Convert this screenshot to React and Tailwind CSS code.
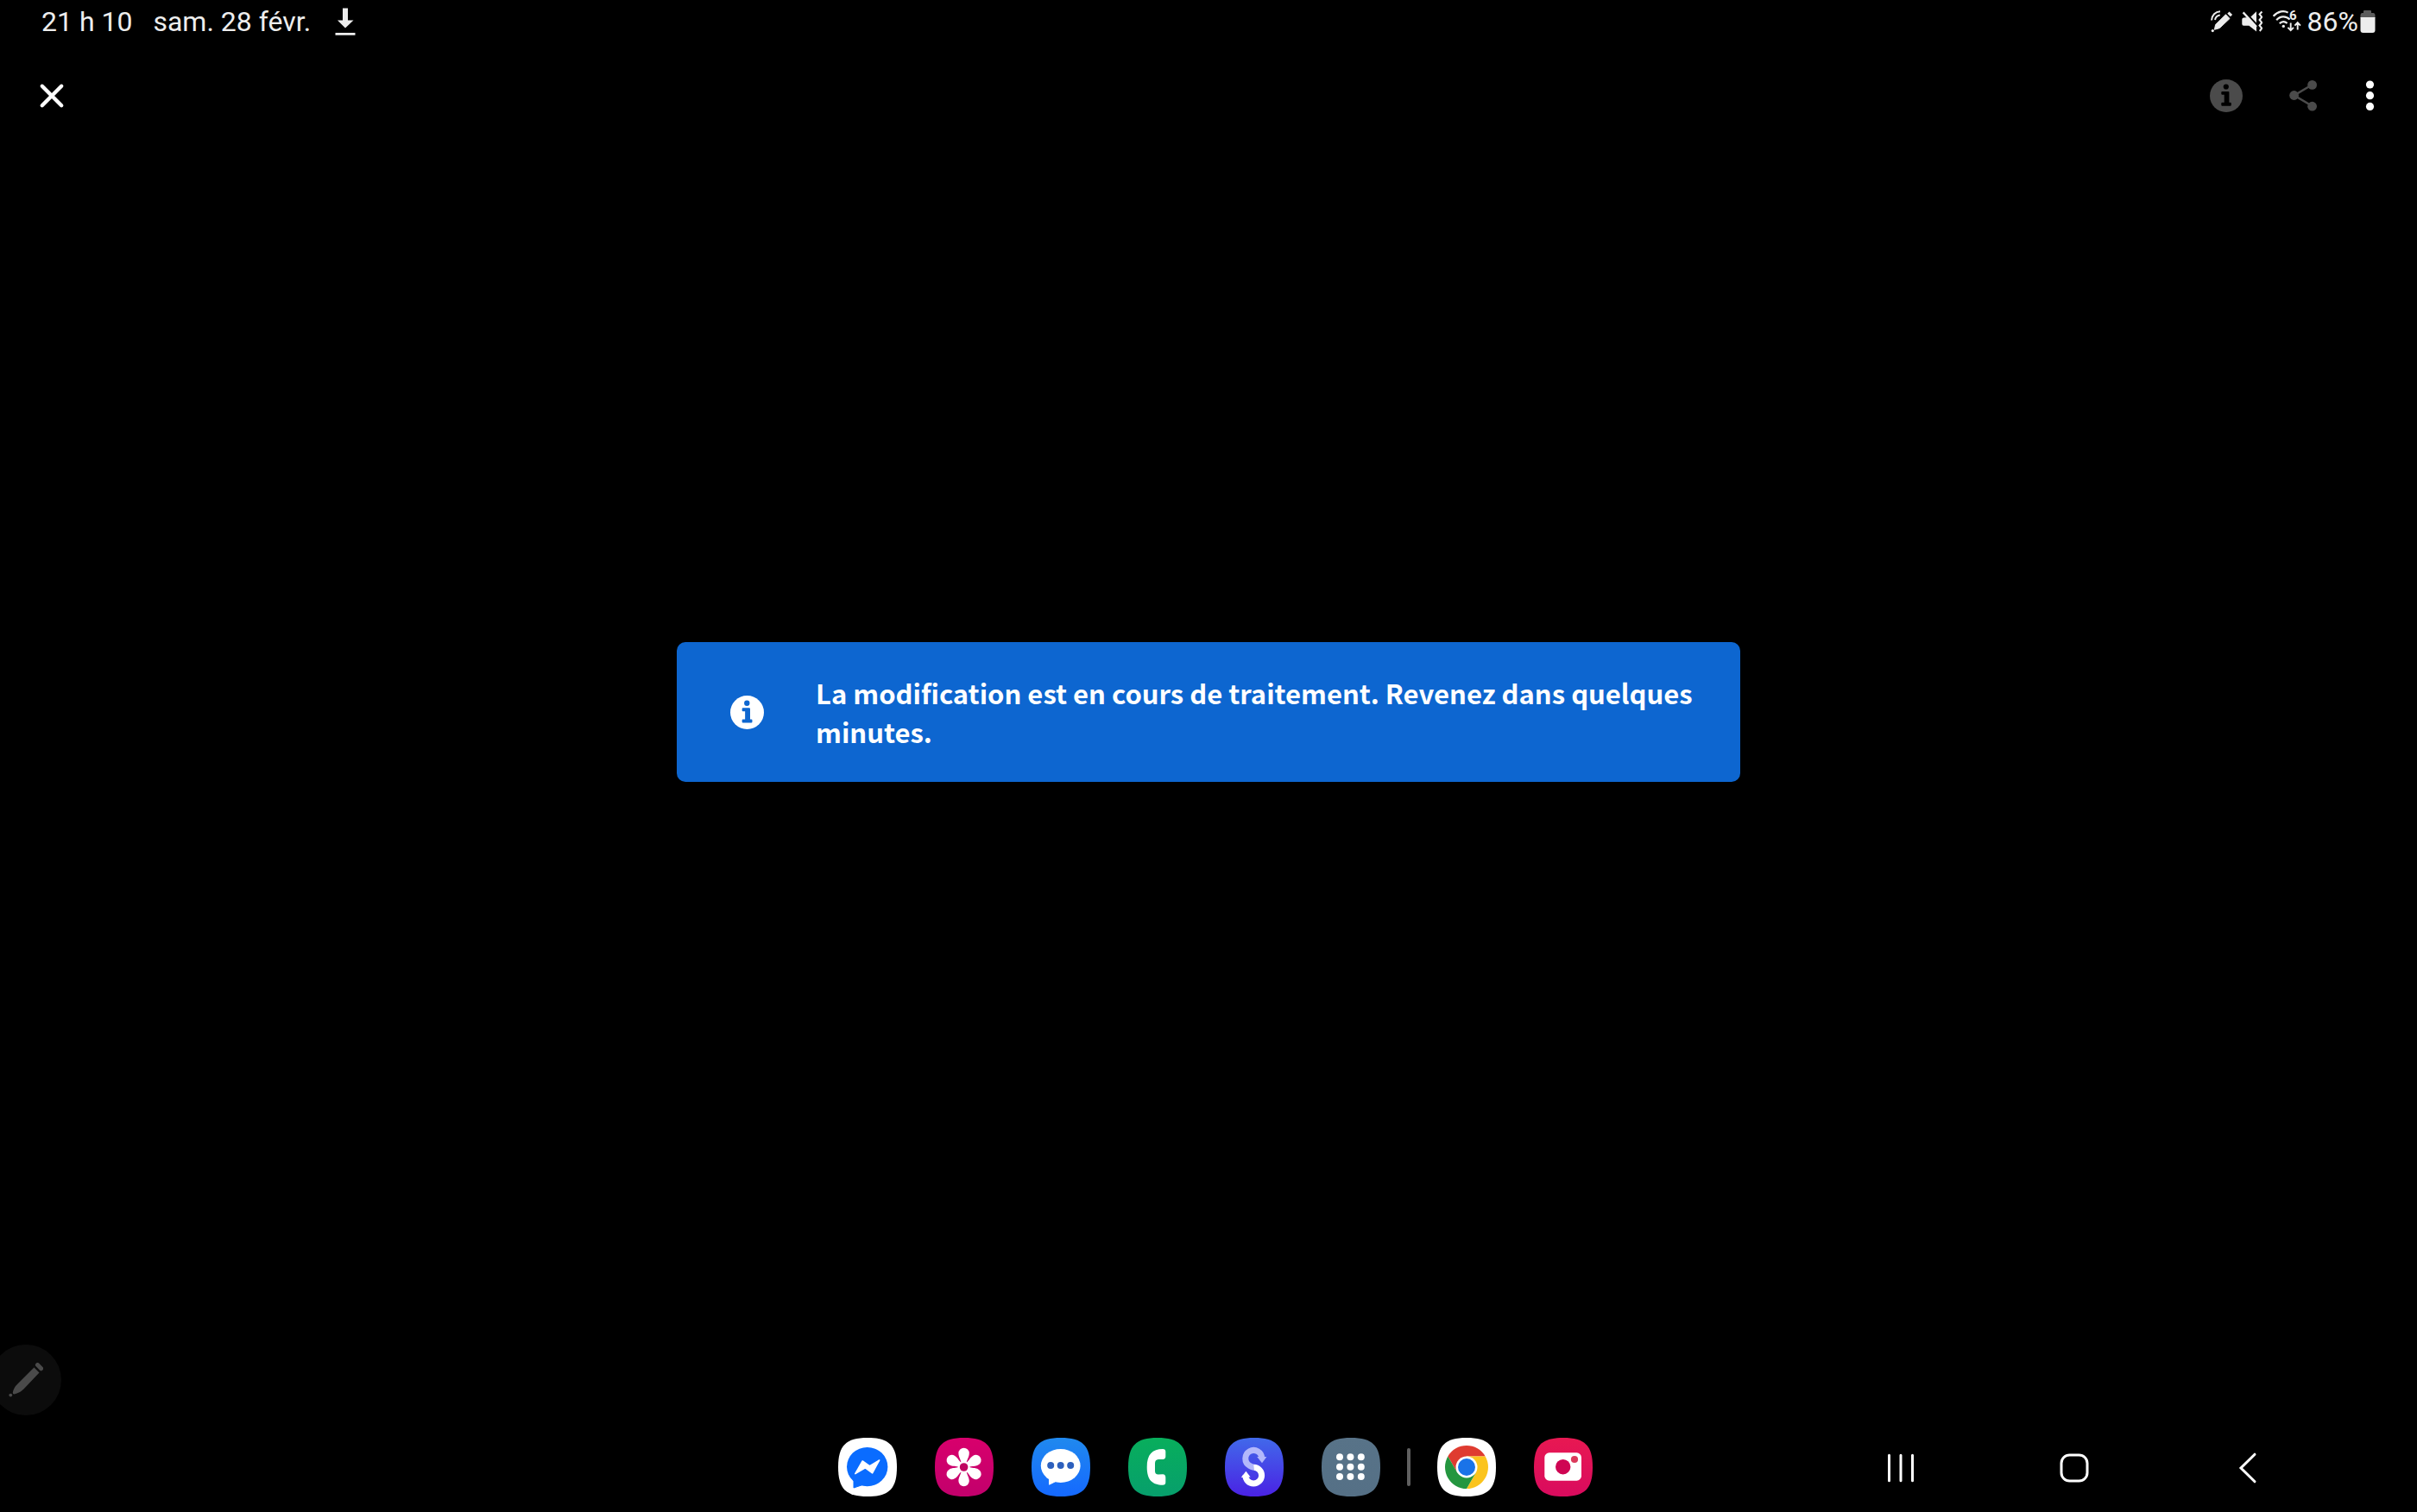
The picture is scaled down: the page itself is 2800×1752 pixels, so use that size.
const TILE = "M34 0C59 0 68 9 68 34S59 68 34 68 0 59 0 34 9 0 34 0Z";

function AppTile({ label, id, from, to, children }) {
  return (
    <button type="button" aria-label={label} className="size-[68px] shrink-0">
      <svg viewBox="0 0 68 68" className="size-full" aria-hidden="true">
        <defs>
          <linearGradient id={id} x1="0" y1="0" x2="0" y2="1">
            <stop offset="0" stopColor={from} />
            <stop offset="1" stopColor={to} />
          </linearGradient>
        </defs>
        <path d={TILE} fill={`url(#${id})`} />
        {children}
      </svg>
    </button>
  );
}

function InfoIcon({ disc, mark, className }) {
  return (
    <svg viewBox="0 0 38 38" className={className} aria-hidden="true">
      <circle cx="19" cy="19" r="19" fill={disc} />
      <circle cx="18.8" cy="8.5" r="3.1" fill={mark} />
      <path
        d="M14.3 14H21.4Q22.4 14 22.4 15V26.8H23.8Q24.8 26.8 24.8 27.8V29.7Q24.8 30.7 23.8 30.7H14.3Q13.3 30.7 13.3 29.7V27.8Q13.3 26.8 14.3 26.8H16.7V17.8H14.3Q13.3 17.8 13.3 16.8V15Q13.3 14 14.3 14Z"
        fill={mark}
      />
    </svg>
  );
}

function StatusBar() {
  return (
    <div className="flex h-[50px] items-center justify-between pr-12 pl-12 text-[32px] leading-[50px] text-[#ededed]">
      <div className="flex items-center">
        <time>21 h 10</time>
        <span className="ml-6">sam. 28 févr.</span>
        <svg viewBox="0 0 24 32" className="ml-7 h-8 w-6" fill="currentColor" role="img" aria-label="Téléchargement">
          <path d="M9 0.5H15V14.5H21.5L12 23.5 3 14.5H9Z" />
          <path d="M0.5 29H23.5V31.8H0.5Z" />
        </svg>
      </div>
      <div className="flex items-center">
        <svg viewBox="0 0 26 26" className="size-[26px]" role="img" aria-label="Stylet connecté">
          <path d="M17.5 4.8L22 9.5 10.3 20.6 4.4 22.3 5.6 16.6Z" fill="currentColor" stroke="currentColor" strokeWidth="1" strokeLinejoin="round" />
          <path d="M20.4 2.6L24 6.2" stroke="currentColor" strokeWidth="3.2" />
          <circle cx="2.3" cy="23.6" r="1.6" fill="currentColor" />
          <path d="M1 11.5C1.4 5.6 5.4 1.6 11 1.3M5 11C5.6 8 7.6 6 10.8 5.6" fill="none" stroke="currentColor" strokeWidth="2" />
        </svg>
        <svg viewBox="0 0 24 26" className="ml-[10px] h-[26px] w-6" role="img" aria-label="Mode vibreur">
          <path d="M5 8.2H6.6L17 19V24.6L8.4 17.8H2.2Q0.3 17.8 0.3 15.8V10.6Q0.3 8.4 2.4 8.4Z" fill="currentColor" />
          <path d="M17 1.2V14.4L10.4 7.4Z" fill="currentColor" />
          <path d="M1.6 2.4L17 19" stroke="currentColor" strokeWidth="2.4" />
          <path d="M23.4 1.5L20.6 4.6 23.2 7.8 20.6 11 23.2 14.2 20.6 17.6 23.2 20.8 20.8 24" fill="none" stroke="currentColor" strokeWidth="2.1" />
        </svg>
        <svg viewBox="0 -6 34 38" className="ml-3 h-[38px] w-[34px]" role="img" aria-label="Wi-Fi 6">
          <g fill="none" stroke="currentColor" strokeWidth="2.2">
            <path d="M0.6 6.8C6 0.6 13 0 17.6 2.6" />
            <path d="M4.2 11.2C8.6 6.2 15.4 6.2 19.6 10.6" />
            <path d="M7.8 15.2C10.4 12.4 14 12.4 16.6 15" />
            <path d="M20.7 14.6V23M17.4 19.8L20.7 23.2 24 19.8M28.7 22.4V14.6M25.4 17.6L28.7 14.2 32 17.6" strokeWidth="1.9" />
          </g>
          <circle cx="12.3" cy="18.4" r="1.7" fill="currentColor" />
          <text x="19" y="11.4" fontSize="15" fontWeight="700" fontFamily="Roboto, sans-serif" fill="currentColor">6</text>
        </svg>
        <span className="ml-1.5">86%</span>
        <svg viewBox="0 0 18 26" className="ml-0.5 h-[26px] w-[18px]" role="img" aria-label="Batterie">
          <path d="M5 0H12Q13 0 13 1V3H15.5Q17.5 3 17.5 5.5V9H0.5V5.5Q0.5 3 2.5 3H4V1Q4 0 5 0Z" fill="#5c5c5c" />
          <path d="M0.5 8H17.5V23Q17.5 26 14.5 26H3.5Q0.5 26 0.5 23Z" fill="currentColor" />
        </svg>
      </div>
    </div>
  );
}

function Toolbar() {
  return (
    <div className="flex h-[122px] items-center justify-between pr-[38px] pl-11">
      <button type="button" aria-label="Fermer">
        <svg viewBox="0 0 32 32" className="size-8" fill="none" stroke="#fff" strokeWidth="4.4" strokeLinecap="round" aria-hidden="true">
          <path d="M4.8 4.8L27.2 27.2M27.2 4.8L4.8 27.2" />
        </svg>
      </button>
      <div className="flex items-center">
        <button type="button" aria-label="Informations">
          <InfoIcon disc="#4b4b4b" mark="#000" className="size-[38px]" />
        </button>
        <button type="button" aria-label="Partager" className="ml-[54px]">
          <svg viewBox="0 0 32 36" className="h-9 w-8" fill="#4b4b4b" stroke="#4b4b4b" aria-hidden="true">
            <path d="M26.8 5L5.8 17.5 26.8 30" fill="none" strokeWidth="2.6" />
            <circle cx="5.6" cy="17.5" r="5.4" stroke="none" />
            <circle cx="26.6" cy="5.4" r="5.4" stroke="none" />
            <circle cx="26.6" cy="30.2" r="5.4" stroke="none" />
          </svg>
        </button>
        <button type="button" aria-label="Plus d’options" className="ml-[46px]">
          <svg viewBox="0 0 32 36" className="h-9 w-8" fill="#fff" aria-hidden="true">
            <circle cx="15.5" cy="5" r="4.6" />
            <circle cx="15.5" cy="17.7" r="4.6" />
            <circle cx="15.5" cy="30.4" r="4.6" />
          </svg>
        </button>
      </div>
    </div>
  );
}

function Dock() {
  return (
    <div className="flex items-center gap-11 pl-4 pb-0.5">
      <AppTile label="Messenger" id="tile-messenger" from="#ffffff" to="#ffffff">
        <path d="M18 47V58L27.5 54.8C24 54 20 51 18 47Z" fill="#0a6cff" stroke="#0a6cff" strokeLinejoin="round" />
        <ellipse cx="33.7" cy="33.6" rx="23.7" ry="22.6" fill="#0a6cff" />
        <path d="M19.8 41.6L28.2 27 36.6 32.8 47.6 26 39.6 40.8 31.4 34.8Z" fill="#fff" stroke="#fff" strokeWidth="1.6" strokeLinejoin="round" />
      </AppTile>
      <AppTile label="Galerie" id="tile-gallery" from="#d8006c" to="#c2006c">
        <g fill="#fff" transform="translate(33.6 34)">
          {[0, 60, 120, 180, 240, 300].map((angle) => (
            <path key={angle} transform={`rotate(${angle})`} d="M-2.8 -4C-3.4 -9 -6.2 -11.5 -6.2 -16A6.2 6.2 0 0 1 6.2 -16C6.2 -11.5 3.4 -9 2.8 -4Z" />
          ))}
          <circle r="6.6" />
          <circle r="4.8" fill="#c00560" />
        </g>
      </AppTile>
      <AppTile label="Messages" id="tile-messages" from="#2089ee" to="#1569ff">
        <path d="M20.5 44V54.2L29 50Z" fill="#fff" stroke="#fff" strokeLinejoin="round" />
        <ellipse cx="33.7" cy="32.4" rx="22.9" ry="19.5" fill="#fff" />
        <g fill="#2d60bd">
          <circle cx="22.2" cy="32" r="4" />
          <circle cx="33.7" cy="32" r="4" />
          <circle cx="45.2" cy="32" r="4" />
        </g>
      </AppTile>
      <AppTile label="Téléphone" id="tile-phone" from="#08ae5c" to="#079f6c">
        <path d="M40 13Q43.3 13 43.3 16V21.5Q43.3 24.7 40 25H35Q31 25.3 31 29.5V38.5Q31 42.5 35 42.4L40 42.2Q43.3 42.4 43.3 46V51.5Q43.3 54.7 40 54.7C28 54.7 21.7 49 21.7 34S28 13 40 13Z" fill="#fff" />
      </AppTile>
      <AppTile label="Smart Switch" id="tile-switch" from="#4169ea" to="#4a22e4">
        <path d="M42.8 24A9.5 9.5 0 1 0 28.5 32.2Q30.8 33.7 33.6 34.4" fill="none" stroke="#b3b8fb" strokeWidth="7" />
        <path d="M37.2 22L48.4 22 43 29.2Z" fill="#b3b8fb" />
        <path d="M33.4 34.2A9.4 9.4 0 1 1 23.8 43.6" fill="none" stroke="#fff" strokeWidth="7" />
        <path d="M18.8 46L24.4 38.8 29.6 45.4Z" fill="#fff" />
      </AppTile>
      <AppTile label="Applications" id="tile-apps" from="#587388" to="#557086">
        <g fill="#fff">
          {[22.3, 33.7, 45].map((y) => [21, 33.4, 45.8].map((x) => <circle key={`${x}-${y}`} cx={x} cy={y} r="4" />))}
        </g>
      </AppTile>
      <div className="-mx-[13px] h-11 w-1 shrink-0 rounded-full bg-[#606060]" />
      <AppTile label="Chrome" id="tile-chrome" from="#ffffff" to="#ffffff">
        <path d="M12.35 21.5A25 25 0 0 1 55.65 21.5H34L23.17 40.25Z" fill="#df3b30" />
        <path d="M55.65 21.5A25 25 0 0 1 34 59L44.83 40.25 34 21.5Z" fill="#fbc41d" />
        <path d="M34 59A25 25 0 0 1 12.35 21.5L23.17 40.25H44.83Z" fill="#24963f" />
        <circle cx="34" cy="34" r="12.5" fill="#fff" />
        <circle cx="34" cy="34" r="10" fill="#1a73e8" />
      </AppTile>
      <AppTile label="Appareil photo" id="tile-camera" from="#e81852" to="#d90b5e">
        <rect x="12.3" y="17.3" width="42.7" height="32.4" rx="5.5" fill="#fff" />
        <circle cx="33.7" cy="33.7" r="8.7" fill="#cf0553" />
        <circle cx="47" cy="25" r="4.1" fill="#dc3a5c" />
      </AppTile>
    </div>
  );
}

function SystemNav() {
  return (
    <nav aria-label="Système" className="flex justify-end pr-24">
      <button type="button" aria-label="Applications récentes" className="flex w-[201px] justify-center">
        <svg viewBox="0 0 36 36" className="size-9" stroke="#fff" strokeWidth="3" strokeLinecap="round" aria-hidden="true">
          <path d="M4.5 3.2V32.8M18 3.2V32.8M31.5 3.2V32.8" />
        </svg>
      </button>
      <button type="button" aria-label="Accueil" className="flex w-[201px] justify-center">
        <svg viewBox="0 0 36 36" className="size-9" fill="none" stroke="#fff" strokeWidth="3" aria-hidden="true">
          <rect x="3" y="3" width="30" height="30" rx="9.5" />
        </svg>
      </button>
      <button type="button" aria-label="Retour" className="flex w-[201px] justify-center">
        <svg viewBox="0 0 36 36" className="size-9" fill="none" stroke="#fff" strokeWidth="3" strokeLinecap="round" aria-hidden="true">
          <path d="M26 2.2L10 18 26 33.8" />
        </svg>
      </button>
    </nav>
  );
}

export default function App() {
  return (
    <div className="relative flex min-h-screen flex-col overflow-hidden bg-black font-['Roboto',sans-serif]">
      <header>
        <StatusBar />
        <Toolbar />
      </header>

      <main className="flex flex-1 items-center justify-center pb-[172px]">
        <div role="status" className="flex w-[44%] items-center rounded-[10px] bg-[#0d66d0] py-9 pr-10 pl-[62px]">
          <InfoIcon disc="#fff" mark="#0d66d0" className="size-[39px] shrink-0" />
          <p className="ml-[60px] text-[31px] leading-[45px] font-bold text-white font-['Noto_Sans_CJK_SC','Noto_Sans',sans-serif]">
            La modification est en cours de traitement. Revenez dans quelques minutes.
          </p>
        </div>
      </main>

      <footer className="grid h-[102px] grid-cols-[1fr_auto_1fr] items-center">
        <span />
        <Dock />
        <SystemNav />
      </footer>

      <button
        type="button"
        aria-label="Stylet"
        className="absolute bottom-[112px] -left-[11px] flex size-[82px] items-center justify-center rounded-full bg-[#0c0c0c]"
      >
        <svg viewBox="0 0 40 40" className="size-10" fill="#4a4a4a" aria-hidden="true">
          <path d="M29.5 5.5L35.5 11.6 17.5 30.5Q13 35 6.5 36.5 4.5 36.5 4.8 34.5 6 28.5 10.5 24.5Z" />
          <path d="M33.5 2.6L37.6 6.8" stroke="#4a4a4a" strokeWidth="5" strokeLinecap="round" />
          <circle cx="2.3" cy="37.6" r="1.9" />
        </svg>
      </button>
    </div>
  );
}
